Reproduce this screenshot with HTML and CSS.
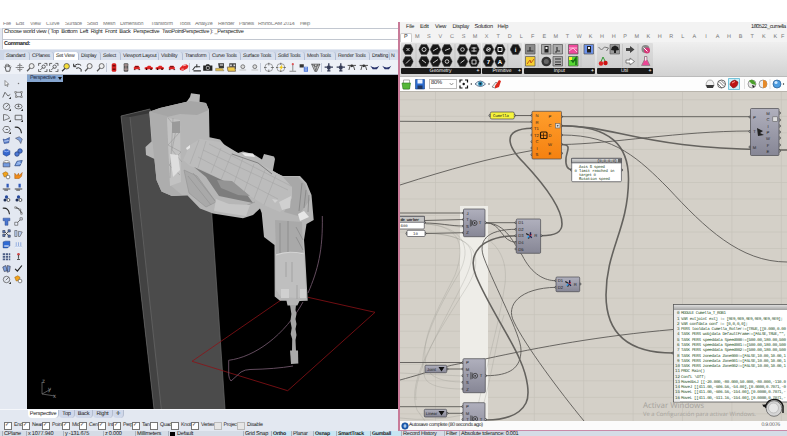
FILE: index.html
```html
<!DOCTYPE html>
<html lang="en">
<head>
<meta charset="utf-8">
<title>Robot toolpath workspace</title>
<link rel="stylesheet" href="styles.css">
</head>
<body>
<svg class="defs" width="0" height="0" aria-hidden="true">
<defs>
<symbol id="hex" viewBox="0.4 0.7 11.2 10.6"><path d="M3.2 1h5.6L11.500 6 8.800 11H3.200L.5 6z" fill="#161616" stroke="#555" stroke-width=".6"/></symbol>
<symbol id="hand" viewBox="0 0 12 12"><path d="M3 6.5 1.8 5M3.5 6V2.5M5 5.5v-4M6.7 5.5V2M8.3 6V3M3 6l1 4.5h4.2L9 6.500 10 5" fill="none" stroke="#444"/></symbol>
<symbol id="rot" viewBox="0 0 12 12"><path d="M6 1v10M1 6h10M3 4Q6 2 9 4M3 8q3 2 6 0" fill="none" stroke="#555" stroke-width=".8"/></symbol>
<symbol id="lens" viewBox="0 0 12 12"><circle cx="7" cy="4.300" r="3" fill="#eee" stroke="#555"/><path d="M5 6.800 1.500 10.500" stroke="#555" stroke-width="1.500"/></symbol>
<symbol id="lensy" viewBox="0 0 12 12"><circle cx="7" cy="4.500" r="3.300" fill="#f7df39" stroke="#555"/><path d="M5 7 1.500 10.500" stroke="#333" stroke-width="1.500"/></symbol>
<symbol id="fit" viewBox="0 0 12 12"><path d="M1 4V1h3M8 1h3v3M11 8v3H8M4 11H1V8" fill="none" stroke="#444"/><path d="M3 9l3-3" stroke="#444"/><circle cx="7" cy="5" r="2" fill="none" stroke="#444"/></symbol>
<symbol id="undo" viewBox="0 0 12 12"><path d="M1 1.500v3.500h3M1.500 4.500Q6 0 10 3.500M4 7q3-2 6 1v3" fill="none" stroke="#333" stroke-width="1.200"/></symbol>
<symbol id="cartop" viewBox="0 0 12 12"><rect x="3.500" y="1" width="5.500" height="10" rx="1.800" fill="#d92020"/><path d="M4.500 4h3.500M4.500 8h3.500" stroke="#400" stroke-width="1.200"/></symbol>
<symbol id="carbot" viewBox="0 0 12 12"><rect x="3.500" y="1" width="5.500" height="10" rx="1" fill="#555"/><path d="M4 3h4.500M4 8h4.500M6.200 2v8" stroke="#c8a8a8"/></symbol>
<symbol id="carside" viewBox="0 0 12 12"><path d="M1 8V6l3-.8L5 4h3l1.200 1.500L11 6v2z" fill="#e02222"/><circle cx="3.300" cy="8" r="1" fill="#300"/><circle cx="8.700" cy="8" r="1" fill="#300"/></symbol>
<symbol id="carfront" viewBox="0 0 12 12"><path d="M2.500 8V6L4 4h4l1.500 2v2z" fill="#e02222"/><path d="M2.500 8.500h2M8 8.500h2M4 5h4" stroke="#411"/></symbol>
<symbol id="carper" viewBox="0 0 12 12"><path d="M1 7l4-4 4-1 2.500 2-1 3L5 10 1.500 9z" fill="#e02222"/><path d="M5 4l4-1M3 8h3" stroke="#fff" stroke-width=".8"/></symbol>
<symbol id="truck" viewBox="0 0 12 12"><path d="M1 9l3-4h6M2 10h9M6 2v4" fill="none" stroke="#333" stroke-width="1.300"/></symbol>
<symbol id="camera" viewBox="0 0 12 12"><path d="M.5 3.500h3L4.500 2h3l1 1.500h3V10H.5z" fill="#222"/><circle cx="6" cy="6.500" r="2.500" fill="#aaa"/><circle cx="6" cy="6.500" r="1.400" fill="#222"/></symbol>
<symbol id="disk" viewBox="0 0 12 12"><path d="M4 1h7v6H5z" fill="#333"/><path d="M6 2h4v2H6z" fill="#bbb"/><path d="M1 7h8l2 3H1z" fill="#dcb94a" stroke="#665" stroke-width=".5"/></symbol>
<symbol id="folder" viewBox="0 0 12 12"><path d="M3 1h8v7H3z" fill="#454545"/><path d="M4 2.500h2v2H4zM8 2.500h2v2H8z" fill="#ddd"/><path d="M.5 5.500h9l1 5h-9z" fill="#f2cb49" stroke="#765"/></symbol>
<symbol id="ball" viewBox="0 0 12 12"><circle cx="6" cy="5" r="2.300" fill="#ddd" stroke="#666"/><path d="M2 9h8" stroke="#bbb"/></symbol>
<symbol id="target" viewBox="0 0 12 12"><circle cx="6" cy="6" r="4.800" fill="none" stroke="#777" stroke-width=".8"/><path d="M6 0v3.500M6 8.500V12M0 6h3.500M8.500 6H12" stroke="#444" stroke-width=".8"/></symbol>
<symbol id="targety" viewBox="0 0 12 12"><circle cx="6" cy="6" r="4.800" fill="none" stroke="#777" stroke-width=".8"/><path d="M6 0v3M6 9v3M0 6h3M9 6h3" stroke="#444" stroke-width=".8"/><path d="M8 2 4 6.500h2L5 10l4-5H7z" fill="#f0c810"/></symbol>
<symbol id="pin" viewBox="0 0 12 12"><path d="M6 2v8M2 10.500h8" stroke="#777"/><circle cx="6" cy="2" r="1.300" fill="#d55"/></symbol>
<symbol id="cubes" viewBox="0 0 12 12"><path d="M1 2h5v4H1z" fill="#333"/><path d="M6 5h5v6H6z" fill="#4a74d8"/><path d="M7 6.500h3M7 9h3" stroke="#dbe8ff"/></symbol>
<symbol id="cone" viewBox="0 0 12 12"><path d="M1 2h10L7 11H5zM4 2l2 8 2-8M1 2l5 3 5-3" fill="#ccc" stroke="#444" stroke-width=".8"/></symbol>
<symbol id="plane" viewBox="0 0 12 12"><path d="M6 1v9.500M1 5.500h10M4 10h4" stroke="#333a55" stroke-width="1.600"/><path d="M4 4h4v4H4z" fill="#333a55"/></symbol>
<symbol id="plane2" viewBox="0 0 12 12"><path d="M1 3.500h10M4 4l-1.500 5M8 4l1.500 5" stroke="#555" stroke-width="1.200"/><circle cx="6" cy="4" r="1.600" fill="#333"/></symbol>
<symbol id="plane3" viewBox="0 0 12 12"><path d="M.5 4q5.500 4 11 0L8.500 8h-5z" fill="#27326b"/></symbol>

<symbol id="p-arrow" viewBox="0 0 12 12"><path d="M4 2v7l1.700-1.500L7 10l1-.500-1.200-2.500H9z" fill="#fff" stroke="#444" stroke-width=".7"/></symbol>
<symbol id="p-dot" viewBox="0 0 12 12"><circle cx="6" cy="6" r="1" fill="#777"/></symbol>
<symbol id="p-poly" viewBox="0 0 12 12"><path d="M1 10 4 3l4 5 3-2" fill="none" stroke="#444"/><path d="M12 9v3H9z" fill="#333"/></symbol>
<symbol id="p-crv" viewBox="0 0 12 12"><path d="M2 3h8v6H3z" fill="none" stroke="#555"/><path d="M1 2h2v2H1zM9 2h2v2H9zM2 8h2v2H2zM9 8h2v2H9z" fill="#fff" stroke="#444" stroke-width=".6"/></symbol>
<symbol id="p-circ" viewBox="0 0 12 12"><circle cx="6" cy="6" r="4.300" fill="none" stroke="#555"/><path d="M5 7l4-4" stroke="#555"/><path d="M12 9v3H9z" fill="#333"/></symbol>
<symbol id="p-ell" viewBox="0 0 12 12"><ellipse cx="6" cy="6" rx="4.800" ry="3.200" fill="none" stroke="#555"/><path d="M6 3v4M4.500 6h3" stroke="#555"/><path d="M12 9v3H9z" fill="#333"/></symbol>
<symbol id="p-arc" viewBox="0 0 12 12"><path d="M2 2q7 0 8 5L2 10z" fill="none" stroke="#555"/><path d="M12 9v3H9z" fill="#333"/></symbol>
<symbol id="p-rect" viewBox="0 0 12 12"><path d="M1.500 3h9v6h-9z" fill="none" stroke="#444"/><path d="M12 9v3H9z" fill="#333"/></symbol>
<symbol id="p-gon" viewBox="0 0 12 12"><path d="M3.500 2h5L11 6l-2.500 4h-5L1 6z" fill="none" stroke="#555"/><path d="M5 6h3" stroke="#444"/><path d="M12 9v3H9z" fill="#333"/></symbol>
<symbol id="p-fil" viewBox="0 0 12 12"><path d="M1 3q8-1 9 8" fill="none" stroke="#222" stroke-width="1.500"/></symbol>
<symbol id="p-srf" viewBox="0 0 12 12"><path d="M1.500 4 4 5l6-3-1 7-6 1z" fill="#5f83cc" stroke="#223c7a" stroke-width=".7"/><path d="M3 7l6-1" stroke="#dce7ff"/></symbol>
<symbol id="p-ext" viewBox="0 0 12 12"><path d="M2 3l5-2 4 3-2 6-2-4z" fill="#84a5df" stroke="#445" stroke-width=".7"/></symbol>
<symbol id="p-box" viewBox="0 0 12 12"><path d="M1.500 3.500 6 1.500l4.500 2v5L6 11 1.500 8.500z" fill="#3567cf" stroke="#173375" stroke-width=".6"/><path d="M2 3.600 6 5l4-1.400" fill="none" stroke="#aec8ff"/></symbol>
<symbol id="p-pipe" viewBox="0 0 12 12"><circle cx="8" cy="4" r="3" fill="#4d79d4" stroke="#223c7a"/><circle cx="4" cy="8" r="3" fill="#4d79d4" stroke="#223c7a"/></symbol>
<symbol id="p-cyl" viewBox="0 0 12 12"><path d="M1.500 5h9v5.500h-9z" fill="#739be0" stroke="#334" stroke-width=".7"/><ellipse cx="6" cy="3.500" rx="3.500" ry="1.500" fill="#fff" stroke="#555" stroke-width=".7"/></symbol>
<symbol id="p-patch" viewBox="0 0 12 12"><path d="M1 9l3-6 7-1-3 7z" fill="#5f8cd8" stroke="#334f88"/><path d="M3 7l6-1M4.500 4.500l4-.5" stroke="#cfe0ff"/></symbol>
<symbol id="p-join" viewBox="0 0 12 12"><path d="M1 3l4-2 3 2-1 4-4 1z" fill="#f2a31c" stroke="#9a5d00" stroke-width=".7"/><circle cx="8" cy="8" r="2.500" fill="#fff" stroke="#666"/></symbol>
<symbol id="p-expl" viewBox="0 0 12 12"><path d="M1 10V3l3 3 2-3 1 3 4-4-1 5-3 3z" fill="#f08b19" stroke="#9a4d00" stroke-width=".6"/></symbol>
<symbol id="p-trim" viewBox="0 0 12 12"><path d="M6 1h3v5H6z" fill="#2f58b8"/><path d="M1 8h10M3 9.500h5" stroke="#444" stroke-width="1.300"/></symbol>
<symbol id="p-grp" viewBox="0 0 12 12"><circle cx="6" cy="4" r="2.200" fill="#274a9c"/><circle cx="4" cy="8" r="2" fill="#1c2c55"/><circle cx="8.500" cy="8" r="2" fill="#fff" stroke="#333"/></symbol>
<symbol id="p-pts" viewBox="0 0 12 12"><path d="M2 2q6 0 8 8M2 2l6 3 2 5" fill="none" stroke="#444"/><path d="M1 1h2v2H1zM7 4h2v2H7zM9 9h2v2H9z" fill="#fff" stroke="#333" stroke-width=".6"/></symbol>
<symbol id="p-text" viewBox="0 0 12 12"><path d="M1.500 1.500h9V5H8v6H4V5H1.500z" fill="#4a76cf" stroke="#233f7f" stroke-width=".6"/></symbol>
<symbol id="p-move" viewBox="0 0 12 12"><path d="M4 8l4-4" stroke="#444"/><path d="M1 7h4v4H1zM8 1h3v3H8z" fill="#eef3ff" stroke="#444" stroke-width=".8"/></symbol>
<symbol id="p-arr" viewBox="0 0 12 12"><path d="M1 2h3v3H1zM1 7h3v3H1zM8 1h3v3H8zM8 8h3v3H8z" fill="#5c7fc4" stroke="#223" stroke-width=".7"/><path d="M4 4l4 4M4 8l4-4" stroke="#333"/></symbol>
<symbol id="p-flow" viewBox="0 0 12 12"><path d="M1 2h3v8H1zM6 3l5 1-3 6H6z" fill="#b9cdf0" stroke="#555" stroke-width=".8"/></symbol>
<symbol id="p-bool" viewBox="0 0 12 12"><path d="M1.500 2.500l3-1h6v6l-3 3h-6z" fill="#2f6ad4" stroke="#173375" stroke-width=".6"/><path d="M3 8h6" stroke="#fff" stroke-width="1.400"/></symbol>
<symbol id="p-lite" viewBox="0 0 12 12"><path d="M1 9.500h10M3 8V3M6 8V3M9 8V3" stroke="#7c9ddb"/><path d="M1 10h10" stroke="#f8fbff"/></symbol>
<symbol id="p-grid" viewBox="0 0 12 12"><path d="M1 1.500h3v2.500H1zM5 1.500h3v2.500H5zM9 1.500h2v2.500H9zM1 5h3v2.500H1zM5 5h3v2.500H5zM9 5h2v2.500H9zM1 8.500h3V11H1zM5 8.500h3V11H5zM9 8.500h2V11H9z" fill="#4b5c84"/></symbol>
<symbol id="p-ana" viewBox="0 0 12 12"><circle cx="6" cy="3" r="1.800" fill="#c44"/><path d="M6 4v5M4 10h4" stroke="#555" stroke-width="1.500"/></symbol>
<symbol id="p-dim" viewBox="0 0 12 12"><path d="M1 4l4-2 2 7-4 1zM7 2l4 1-1 7-3 1z" fill="#7d9fdb" stroke="#223" stroke-width=".7"/></symbol>
<symbol id="p-chk" viewBox="0 0 12 12"><path d="M1.500 6.500 4.500 9.500 10.500 2" fill="none" stroke="#222" stroke-width="1.600"/></symbol>
</defs>
</svg>

<div class="topgap"></div>
<div class="desk">
<section class="rhino">
  <div class="rmenu"><span>File</span><span>Edit</span><span>View</span><span>Curve</span><span>Surface</span><span>Solid</span><span>Mesh</span><span>Dimension</span><span>Transform</span><span>Tools</span><span>Analyze</span><span>Render</span><span>Panels</span><span>RhinoCAM 2014</span><span>Help</span></div>
  <div class="history">Choose world view ( Top&nbsp; Bottom&nbsp; Left&nbsp; Right&nbsp; Front&nbsp; Back&nbsp; Perspective&nbsp; TwoPointPerspective ): _Perspective</div>
  <div class="command">Command:</div>
  <div class="rtabs"><span>Standard</span><span>CPlanes</span><span class="on">Set View</span><span>Display</span><span>Select</span><span>Viewport Layout</span><span>Visibility</span><span>Transform</span><span>Curve Tools</span><span>Surface Tools</span><span>Solid Tools</span><span>Mesh Tools</span><span>Render Tools</span><span>Drafting</span><span class="last">N</span></div>
  <div class="rtools">
    <svg><use href="#hand"/></svg><svg><use href="#rot"/></svg><svg><use href="#lens"/></svg><svg><use href="#fit"/></svg><svg><use href="#fit"/></svg><svg><use href="#lensy"/></svg><svg><use href="#undo"/></svg><svg><use href="#lens"/></svg><svg><use href="#lens"/></svg><i></i>
    <svg><use href="#cartop"/></svg><svg><use href="#carbot"/></svg><svg><use href="#carfront"/></svg><svg><use href="#carside"/></svg><svg><use href="#carside"/></svg><svg><use href="#carfront"/></svg><svg><use href="#carper"/></svg><i></i>
    <svg><use href="#truck"/></svg><svg><use href="#camera"/></svg><svg><use href="#disk"/></svg><svg><use href="#folder"/></svg><svg><use href="#ball"/></svg><svg><use href="#ball"/></svg><i class="wide"></i>
    <svg><use href="#target"/></svg><svg><use href="#targety"/></svg><svg><use href="#pin"/></svg><svg><use href="#cubes"/></svg><svg><use href="#cone"/></svg><i></i>
    <svg><use href="#plane"/></svg><svg><use href="#plane"/></svg><svg><use href="#plane2"/></svg><svg><use href="#plane2"/></svg><svg><use href="#plane3"/></svg><svg><use href="#plane3"/></svg>
  </div>
  <div class="rmain">
    <div class="palette">
      <svg><use href="#p-arrow"/></svg><svg><use href="#p-dot"/></svg>
      <svg><use href="#p-poly"/></svg><svg><use href="#p-crv"/></svg>
      <svg><use href="#p-circ"/></svg><svg><use href="#p-ell"/></svg>
      <svg><use href="#p-arc"/></svg><svg><use href="#p-rect"/></svg>
      <svg><use href="#p-gon"/></svg><svg><use href="#p-fil"/></svg>
      <svg><use href="#p-srf"/></svg><svg><use href="#p-ext"/></svg>
      <svg><use href="#p-box"/></svg><svg><use href="#p-pipe"/></svg>
      <svg><use href="#p-cyl"/></svg><svg><use href="#p-patch"/></svg>
      <svg><use href="#p-join"/></svg><svg><use href="#p-expl"/></svg>
      <svg><use href="#p-trim"/></svg><svg><use href="#p-trim"/></svg>
      <svg><use href="#p-grp"/></svg><svg><use href="#p-grp"/></svg>
      <svg><use href="#p-fil"/></svg><svg><use href="#p-pts"/></svg>
      <svg><use href="#p-text"/></svg><svg><use href="#p-move"/></svg>
      <svg><use href="#p-arr"/></svg><svg><use href="#p-flow"/></svg>
      <svg><use href="#p-bool"/></svg><svg><use href="#p-lite"/></svg>
      <svg><use href="#p-grid"/></svg><svg><use href="#p-ana"/></svg>
      <svg><use href="#p-dim"/></svg><svg><use href="#p-chk"/></svg>
      <svg><use href="#p-circ"/></svg><svg><use href="#p-join"/></svg>
    </div>
    <div class="viewport">
      <div class="vlabel"><span>Perspective</span><b></b></div>
      <svg class="scene" viewBox="27 75 371 334" width="371" height="334">
        <path d="M121 116 150 109 209.500 180 225 409H154z" fill="#4b4b4b"/>
        <path d="M121 116 130 114 161.300 409H154z" fill="#424242"/>
        <path d="M121 116 150 109V113L130 117z" fill="#373737"/>
        <path d="M121 116 154 409M130 117 161.300 409M211.700 213 225 409M121 116 150 109" stroke="#686868" stroke-width=".7" fill="none"/>
        <g fill="none" stroke="#8c1216" stroke-width=".8"><path d="M281 300 192 361.300 287.700 390.700 375 312.300 308 297.300"/></g>
        <path d="M322.300 216C323 250 318 270 308 293M303 302C285 335 255 357 228.700 360.300V375Q229 379 231 381L241 372Q245 369.500 250 369.500 275 369 293 366" fill="none" stroke="#6d5368" stroke-width=".9"/>
        <path d="M149.300 111.700 160 108 186.700 101.700 190 97 191 93.300 200 94.500 199.500 101.700 206 103 209 110 209.500 137.300 220 139.500 227 148 238 153 243 151.500 253 154 262 159.500 264 154 274 156.500 275 159 272.700 171.500 283 176 300 176 306.500 183 311.500 195 313.700 220 306.500 224 304 240 305 253 307.700 300.700 299.500 301 297.300 305.500 287.500 305.500 286.500 300.700 280 300.700 274.700 296.500 274.500 245 264 237 261.700 213 260 208.500 253 215 243 218.300 213 213.500 200 208.500 187.500 195.500 172 196 161.500 191.500 156.500 180 154.500 159 146 155 145.500 147 151.500 141.500z" fill="#b6b6b6"/>
        <path d="M149.300 111.700 160 108 190 101 206 103 209 110 197 115 180 114 167 117z" fill="#a6a6a6"/>
        <path d="M149.300 111.700 167 116 170 185 182 195 172 196 161.500 191.500 156.500 180z" fill="#adadad"/>
        <path d="M167 118 180 120 181 182 170 186z" fill="#c2c2c2"/>
        <path d="M168 118 180 132 168 145 181 152 169 165 180 175M173 118l-3 60M177 125 172 150 182 162" stroke="#929292" stroke-width=".5" fill="none"/>
        <path d="M170 154l8 1 2 15-7 7z" fill="#dedede"/>
        <path d="M172 122 180 121V133H172z" fill="#9a9a9a"/>
        <path d="M183 160 190 145 200 139 220 142 243 156 270 169 287 179 294 190 292 202 280 212 266 206 240 190 205 171 190 166z" fill="#bcbcbc"/>
        <path d="M199 140 190 164M206 141 198 168M221 148 211 173M232 153 221 180M243 158 233 186M254 164 244 192M265 170 254 199M276 175 264 205M203 150 288 190M198 157 278 199M209 144 291 186" stroke="#a2a2a2" stroke-width=".5" fill="none"/>
        <path d="M194 167 206 177 219 196 253 203 245 192 222 180z" fill="#7d7d7d"/>
        <path d="M217 180 232 181 250 196 238 195 221 188z" fill="#949494"/>
        <path d="M184 170 197 176 216 202 206 207 189 193z" fill="#a9a9a9" stroke="#929292" stroke-width=".6"/>
        <path d="M188 176 211 205M193 173 215 201M219 205l10 4 14-2 12-5" stroke="#909090" stroke-width=".6" fill="none"/>
        <path d="M216 199 229 204 250 205 246 216 226 213 214 211z" fill="#c6c6c6"/>
        <path d="M232 154 258 163 272 174" stroke="#808080" stroke-width="1" fill="none"/>
        <path d="M283 177H298L305 184 310 200 298 216 284 212 292 198 292 187z" fill="#a8a8a8"/>
        <path d="M306 190 304 208M309 195 308 212M302 183 299 211" stroke="#808080" stroke-width=".7"/>
        <path d="M298 214 304 211 309 217 300 221z" fill="#e6e6e6"/>
        <path d="M242 153 253 153.500 255 157 245 156zM150 142.500 154 143M186 148l4-3v3l-3 2zM191 95l8 1" fill="#e8e8e8"/>
        <path d="M272 199l6 1-3 3zM279 202 291 196 290 208 282 210z" fill="#d0d0d0"/>
        <path d="M275 220 302 222 303 252 276 255z" fill="#a9a9a9"/>
        <path d="M280 223V253M288 221V252M296 237 303 250M296 227 303 240" stroke="#858585" stroke-width=".7"/>
        <path d="M276 254Q290 250 304 255L306 293 298 298 281 297 276 290z" fill="#bfbfbf"/>
        <path d="M276 255Q290 250 304 254" stroke="#ddd" stroke-width=".8" fill="none"/>
        <path d="M286 262v15M292 262v20M297 285v14" stroke="#999" stroke-width=".7"/>
        <path d="M281 289h8v9h-8zM300 289h6v9h-6z" fill="#d0d0d0"/>
        <path d="M290 305h6l-.5 5 1 4-1 5 1 5-1 5 1 6-1 5 .5 11h-4l.2-12-1.500-5 1-6-1.300-7 1-7z" fill="#a5a5a5"/>
        <path d="M290 350.500h8l.3 13-7.300.5z" fill="#a9a9a9"/>
        <path d="M42 394V382M42 394 51 389M42 394 55 396" stroke="#777" stroke-width=".7" fill="none"/>
        <g class="axis"><text x="42" y="383">z</text><text x="48" y="391">y</text><text x="53" y="398">x</text></g>
      </svg>
    </div>
  </div>
  <div class="vtabs"><span class="on">Perspective</span><span>Top</span><span>Back</span><span>Right</span><span>✛</span></div>
  <div class="osnap"><label class="c">End</label><label class="c">Near</label><label class="c">Point</label><label class="c">Mid</label><label class="c">Cen</label><label class="c">Int</label><label class="c">Perp</label><label class="c">Tan</label><label>Quad</label><label>Knot</label><label class="c">Vertex</label><label class="off">Project</label><label class="off">Disable</label></div>
</section>

<section class="gh">
  <div class="gmenu"><span>File</span><span>Edit</span><span>View</span><span>Display</span><span>Solution</span><span>Help</span><span class="title">180522_cumella</span></div>
  <div class="gtabs"><span class="on">P</span><span>M</span><span>S</span><span>V</span><span>C</span><span>S</span><span>M</span><span>X</span><span>T</span><span>D</span><span>L</span><span>F</span><span>E</span><span>M</span><span>T</span><span>W</span><span>K</span><span>H</span><span>H</span><span>P</span><span>M</span><span>K</span><span>H</span><span>R</span><span>L</span><span>A</span><span>I</span><span>A</span><span>H</span><span>B</span><span>T</span><span>K</span><span>K</span><span class="end">F</span></div>
  <div class="ribbon">
    <div class="group geo">
      <svg viewBox="0 0 80 25" width="80" height="25">
        <g><use href="#hex" x="1.500" y="1" width="11" height="11"/><use href="#hex" x="1.500" y="13" width="11" height="11"/><use href="#hex" x="17.500" y="1" width="11" height="11"/><use href="#hex" x="17.500" y="13" width="11" height="11"/><use href="#hex" x="29" y="1" width="11" height="11"/><use href="#hex" x="29" y="13" width="11" height="11"/><use href="#hex" x="40.500" y="1" width="11" height="11"/><use href="#hex" x="40.500" y="13" width="11" height="11"/><use href="#hex" x="56" y="1" width="11" height="11"/><use href="#hex" x="56" y="13" width="11" height="11"/><use href="#hex" x="67.500" y="1" width="11" height="11"/><use href="#hex" x="67.500" y="13" width="11" height="11"/></g>
        <path d="M15 1v23M54 1v23" stroke="#bbb" stroke-width=".6"/>
        <g fill="none" stroke="#ddd" stroke-width=".9"><path d="M5.500 5l3 3M8.500 5l-3 3M5 20.500l4-4M21 17l4 3M32 20l5-3.500M32 8l5-3M44 7.500l5-2"/><circle cx="23" cy="6.500" r="2"/><circle cx="46" cy="18.500" r="1.800"/><circle cx="61.500" cy="6.500" r="1.800"/><path d="M59.500 20l4-3M70.500 5h5M70.500 8h5M73 4v5M71 17h4v4h-4z"/></g>
      </svg><em>Geometry<b>+</b></em>
    </div>
    <div class="group prim">
      <svg viewBox="0 0 40 25" width="40" height="25">
        <use href="#hex" x="1" y="1" width="11" height="11"/><use href="#hex" x="1" y="13" width="11" height="11"/><use href="#hex" x="12.500" y="1" width="11" height="11"/><use href="#hex" x="12.500" y="13" width="11" height="11"/><use href="#hex" x="28" y="1" width="11" height="11"/>
        <path d="M25.800 1v23" stroke="#bbb" stroke-width=".6"/>
        <g class="hexlet"><text x="6.500" y="20.700">7</text><text x="18" y="20.700">A</text><text x="33.500" y="9">i</text></g>
        <path d="M4.500 7.500l4-2M16 4.500v4h4v-4z" stroke="#eee" fill="none"/><circle cx="6.500" cy="6.500" r="1.800" stroke="#eee" fill="none" stroke-width=".8"/>
      </svg><em>Primitive<b>+</b></em>
    </div>
    <div class="group inp">
      <svg viewBox="0 0 71.500 25" width="71.500" height="25">
        <g stroke="#555" stroke-width=".7"><path d="M1.500 1.500h9.500v9.500H1.500z" fill="#8a8a8a"/><path d="M1.500 13.500h9.500v9.500H1.500z" fill="#f6cf32"/><path d="M17.500 1.500h9.500v9.500h-9.500zM29 1.500h9.500v9.500H29zM29 13.500h9.500v9.500H29z" fill="#aaa"/><path d="M44.500 1.500H54v9.500h-9.500z" fill="#ef4b9c"/><path d="M44.500 13.500H54v9.500h-9.500z" fill="#56d832"/><path d="M60 1.500h9.500v9.500H60z" fill="#6d93ec"/></g>
        <circle cx="22.300" cy="18.500" r="4.800" fill="#333"/><circle cx="22.300" cy="18.500" r="2.500" fill="#666"/>
        <path d="M14.200 1v23M41.500 1v23M57 1v23" stroke="#bbb" stroke-width=".6"/>
        <path d="M3 8h6.500M6 4v4M33 4v4h3M31 9h2M31 16h6M31 19h6M31 21.500h6" stroke="#333" fill="none" stroke-width="1.200"/>
        <path d="M3 21l3-4 1 3 3-4" stroke="#c4551b" fill="none"/>
        <path d="M20.500 3h4v6.500h-4zM63 3h4v6.500h-4z" fill="#222"/><path d="M21.500 4h2v2h-2zM64 4h2v2h-2z" fill="#eee"/>
        <path d="M45 8l4-3 4 4M45 5h8" stroke="#ffc1dd" fill="none"/><path d="M46 15l3 4 3-4v7" stroke="#166b16" stroke-width="1.500" fill="none"/><path d="M45 14h3v3h-3z" fill="#faf232"/>
      </svg><em>Input<b>+</b></em>
    </div>
    <div class="group util">
      <svg viewBox="0 0 56 25" width="56" height="25">
        <path d="M1.500 4l3 3 3-3 4 1-2 3" fill="none" stroke="#777"/><path d="M13 1.500h9.500v9.500H13z" fill="#999" stroke="#555" stroke-width=".6"/><path d="M14 7l1-3 3-1.500L21 4l1 3-3 .5V10h-2V7.500z" fill="#1d1d1d"/>
        <path d="M3 21l3-7 3 6" fill="none" stroke="#393"/><circle cx="4" cy="20.500" r="2.200" fill="#d22"/><circle cx="8.500" cy="20" r="2.200" fill="#c11"/>
        <path d="M29 5h4V3l4.500 3.500L33 10V8h-4z" fill="#444"/><path d="M29 17h4v-2l4.500 3.500L33 22v-2h-4z" fill="#fff" stroke="#666" stroke-width=".8"/>
        <path d="M25.500 1v23M41 1v23" stroke="#bbb" stroke-width=".6"/>
        <circle cx="48.500" cy="6" r="4" fill="#888"/><circle cx="50" cy="7.500" r="3" fill="#d63878"/><path d="M46.500 4.500l4 4" stroke="#fff"/>
        <path d="M47.500 13.500h2.500v3l3 6h-8.500l3-6z" fill="#e94796" stroke="#777" stroke-width=".6"/><path d="M48 14h1.500v3L48 18z" fill="#eee"/>
      </svg><em>Util<b>+</b></em>
    </div>
  </div>
  <div class="gtool">
    <svg width="27" height="12" viewBox="0 0 27 12"><path d="M2.500 2h6v9h-6z" fill="#fff" stroke="#777" stroke-width=".6"/><path d="M1 5h8.500l-1 6H2z" fill="#55b739" stroke="#2a7a1d" stroke-width=".6"/><path d="M14.500 1.500h9v9.500h-9z" fill="#2c6cd0" stroke="#184285" stroke-width=".6"/><path d="M16.500 1.500h5v4h-5z" fill="#eaf2ff"/><path d="M16.500 7.500h5V11h-5z" fill="#20365e"/></svg>
    <div class="combo"><span>80%</span><svg width="5" height="4" viewBox="0 0 5 4"><path d="M.7 1 2.500 3 4.300 1" fill="none" stroke="#666" stroke-width=".7"/></svg></div>
    <svg width="46" height="12" viewBox="0 0 46 12"><path d="M3 4.500V2h2.500M8 2h2.500v2.500M10.500 7.500V10H8M5.500 10H3V7.500" fill="none" stroke="#111" stroke-width="1.200"/><circle cx="6.700" cy="6" r="1.200" fill="#111"/><circle cx="14.300" cy="6" r=".7" fill="#222"/><path d="M18 6q5.500-6 10.500 0-5 5-10.500 0z" fill="#d8edf5" stroke="#346" stroke-width=".7"/><circle cx="23.400" cy="5.700" r="2.300" fill="#2183ad"/><circle cx="23.400" cy="5.700" r="1" fill="#123"/><circle cx="32" cy="6" r=".7" fill="#222"/><path d="M35 9l4-5 2 2-3 4z" fill="#eee" stroke="#555" stroke-width=".6"/><path d="M38 8l4-6 2 1-2 6-4 1.500z" fill="#dd2a1d"/></svg>
    <svg class="right" width="83" height="12" viewBox="0 0 83 12"><path d="M2 8q0-6 4-6t4 6z" fill="#f2f2f2" stroke="#777" stroke-width=".6"/><path d="M2 7h8l-1 3H3z" fill="#3a3a3a"/><circle cx="17.500" cy="6" r="4" fill="#fff" stroke="#444" stroke-width=".8"/><path d="M15 3.500l5 5M17 2.500l4 4M14 6l4 4" stroke="#444" stroke-width=".7"/><path d="M24.500.500h11v11h-11z" fill="#cdeff8" stroke="#58b9d4" stroke-width=".8"/><path d="M26 7q0-4 5-5l3 2q0 5-5 6z" fill="#bd1515" stroke="#6c0a0a" stroke-width=".5"/><path d="M28 5l3-1.500" stroke="#ff9c92"/><path d="M40.500 1v10M66 1v10" stroke="#ccc" stroke-width=".6"/><circle cx="48" cy="6" r="4" fill="#e8e8e8" stroke="#666" stroke-width=".6"/><path d="M45 3q3-3 6 1l1 3-4-1z" fill="#4a9f2a"/><path d="M48 7l3 1-2 2z" fill="#222"/><circle cx="59" cy="6" r="4" fill="#eee" stroke="#666" stroke-width=".6"/><path d="M59 2a4 4 0 0 1 0 8z" fill="#e58a2a"/><circle cx="73" cy="6" r="4" fill="#4d9de0" stroke="#28598c" stroke-width=".7"/><circle cx="72" cy="4.500" r="1.600" fill="#cfe8ff"/><circle cx="79.500" cy="6" r=".7" fill="#222"/></svg>
  </div>
  <svg class="canvas" viewBox="400 91 387 330" width="387" height="330">
    <defs>
      <pattern id="grid" x="435" y="99.300" width="49.400" height="16.530" patternUnits="userSpaceOnUse"><path d="M0 .3H49.400M.3 0V16.530" stroke="#c4c0b8" stroke-width=".8"/></pattern>
      <linearGradient id="comp" x1="0" y1="0" x2="0" y2="1"><stop offset="0" stop-color="#b0b0bd"/><stop offset="1" stop-color="#868695"/></linearGradient>
      <linearGradient id="orange" x1="0" y1="0" x2="0" y2="1"><stop offset="0" stop-color="#ff9e2c"/><stop offset="1" stop-color="#f58110"/></linearGradient>
      <linearGradient id="head" x1="0" y1="0" x2="0" y2="1"><stop offset="0" stop-color="#dedede"/><stop offset="1" stop-color="#a2a2a2"/></linearGradient>
      <symbol id="robot" viewBox="0 0 10 10"><path d="M1 2.500 5 5 4 9" stroke="#222" stroke-width="1.700" fill="none"/><path d="M5 5 2.500 8" stroke="#3fa0e8" stroke-width="1.800"/><path d="M5 5 8 4" stroke="#d23" stroke-width="1.600"/><path d="M6 5.500 8 8M6.500 1v3.500" stroke="#1d2050" stroke-width="1.700"/></symbol>
      <symbol id="tgt" viewBox="0 0 10 10"><path d="M1.500 1v8M3 1.500v7" stroke="#333" stroke-width=".8"/><circle cx="6.300" cy="5" r="2.700" fill="none" stroke="#333" stroke-width=".9"/><circle cx="6.300" cy="5" r="1" fill="#333"/></symbol>
    </defs>
    <path d="M400 91h387v330H400z" fill="#d4d0c8"/>
    <path d="M400 91h387v330H400z" fill="url(#grid)"/>
    <path d="M400 91h387v1H400z" fill="#b8b4ac"/>
    <path d="M460 206h28v215h-28z" fill="#eeede8"/>
    <g class="faint">
      <path d="M426 224C460 226 475 245 458 275C440 305 415 350 425 378Q430 389 463 389"/>
      <path d="M426 224C455 226 468 240 455 275C438 310 418 340 427 368Q432 382 463 382"/>
      <path d="M426 233C480 235 485 260 465 290C440 330 405 380 417 410L425 421"/>
      <path d="M426 224C500 224 510 260 504 290C499 325 480 390 475 421"/>
      <path d="M426 233C475 236 480 250 462 285C445 320 412 375 416 400M400 373 463 376M504 315C497 335 490 390 478 421M400 418q30 4 63-3"/>
    </g>
    <g class="wire">
      <path d="M400 121.300 532 122M514 115.500H532M400 185C450 169 490 158 532 150.500M562 116.700H750"/>
      <path class="dbl" d="M532 128.300C500 129 508 147 524 163C538 178 562 205 562 224C562 232 556 235.700 541 235.700"/>
      <path class="dbl" d="M562 125.700C610 126 629 145 628.500 180C628 230 606 250 606 295C606 335 630 353 673 353"/>
      <path class="dbl" d="M562 125.700C620 126 640 150 787 150"/>
      <path d="M562 135C615 135 640 160 668 188C705 228 740 262 787 262"/>
      <path d="M562 144.500C610 144 680 131 750 131"/>
      <path class="dbl" d="M562 144.500C572 145 567 150 566 158Q565 169.500 572 169.700"/>
      <path d="M400 213H464M424 220.500 464 219.500M424 223C440 223 450 226 464 226M425 233.500 464 232.700M485 222.700H517"/>
      <path d="M485 222.700C503 223 500 242.300 517 242.300M485 222.700C507 223 514 245 522 255C532 275 545 280.700 556 280.700"/>
      <path d="M517 229.300C485 229 478 242 484 258C494 285 521 335 521 350C521 368 510 375.700 486 375.700"/>
      <path class="dbl" d="M517 235.700C480 236 467 254 476 276C488 305 512 340 520 360C528 378 530 395 526 403C520 415 505 420 486 420"/>
      <path d="M556 287.300C520 288 505 305 514 322C525 345 560 392 584 421"/>
      <path d="M400 380C430 372 440 367 463 363L485 359C540 347 600 336 673 329.500"/>
      <path d="M400 362.500H463M447 369H463M400 406.700H463M447 413.300H463"/>
    </g>
    <g class="port"><circle cx="532" cy="115.300" r="1"/><circle cx="532" cy="121.700" r="1"/><circle cx="532" cy="128.300" r="1"/><circle cx="532" cy="135" r="1"/><circle cx="532" cy="141.700" r="1"/><circle cx="532" cy="148" r="1"/><circle cx="532" cy="154.700" r="1"/><circle cx="561.500" cy="116.700" r="1"/><circle cx="561.500" cy="125.700" r="1"/><circle cx="561.500" cy="135" r="1"/><circle cx="561.500" cy="144.300" r="1"/><circle cx="561.500" cy="153.300" r="1"/><circle cx="490" cy="115.500" r="1"/><circle cx="514.500" cy="115.500" r="1"/><circle cx="571.500" cy="170" r="1"/><circle cx="621.700" cy="170" r="1"/><circle cx="463.500" cy="213" r="1"/><circle cx="463.500" cy="219.500" r="1"/><circle cx="463.500" cy="226" r="1"/><circle cx="463.500" cy="232.700" r="1"/><circle cx="485.300" cy="222.700" r="1"/><circle cx="516" cy="222.700" r="1"/><circle cx="516" cy="229.300" r="1"/><circle cx="516" cy="235.700" r="1"/><circle cx="516" cy="242.300" r="1"/><circle cx="516" cy="249" r="1"/><circle cx="541" cy="235.700" r="1"/><circle cx="556" cy="280.700" r="1"/><circle cx="556" cy="287.300" r="1"/><circle cx="580" cy="284" r="1"/><circle cx="463" cy="362.500" r="1"/><circle cx="463" cy="369" r="1"/><circle cx="463" cy="375.700" r="1"/><circle cx="463" cy="382.300" r="1"/><circle cx="463" cy="389" r="1"/><circle cx="485.500" cy="375.700" r="1"/><circle cx="463" cy="406.500" r="1"/><circle cx="463" cy="413.300" r="1"/><circle cx="463" cy="419.500" r="1"/><circle cx="485.500" cy="419.500" r="1"/><circle cx="407" cy="233.500" r="1"/><circle cx="425" cy="233.500" r="1"/><circle cx="424.500" cy="222.500" r="1"/><circle cx="447" cy="369" r="1"/><circle cx="447" cy="413.300" r="1"/><circle cx="750" cy="117" r="1"/><circle cx="750" cy="131.500" r="1"/><circle cx="750" cy="147" r="1"/><circle cx="779.500" cy="113" r="1"/><circle cx="779.500" cy="120" r="1"/><circle cx="779.500" cy="126" r="1"/><circle cx="779.500" cy="132" r="1"/><circle cx="779.500" cy="138" r="1"/><circle cx="779.500" cy="145" r="1"/><circle cx="779.500" cy="151" r="1"/><circle cx="673" cy="353" r="1"/></g>
    <g class="box">
      <rect x="532" y="111.300" width="29.500" height="47.700" rx="1" fill="url(#orange)"/>
      <rect x="490.300" y="112" width="24" height="7" rx="1.500" fill="#f6f43c"/>
      <rect x="463.500" y="209" width="21.500" height="27.700" rx="1" fill="url(#comp)"/>
      <rect x="516.300" y="219" width="24.300" height="34.300" rx="1" fill="url(#comp)"/>
      <rect x="556" y="277" width="23.700" height="14.700" rx="1" fill="url(#comp)"/>
      <rect x="463" y="358.700" width="22.300" height="34" rx="1" fill="url(#comp)"/>
      <rect x="463" y="402.700" width="22" height="34" rx="1" fill="url(#comp)"/>
      <rect x="750.500" y="108.500" width="28.500" height="47" rx="1" fill="url(#comp)"/>
      <rect x="425" y="365.300" width="21.700" height="7.400" rx="1" fill="url(#comp)"/>
      <rect x="424.300" y="409.300" width="22.300" height="7.700" rx="1" fill="url(#comp)"/>
      <rect x="395" y="216.300" width="29.300" height="12.700" rx="1" fill="#fff"/>
      <rect x="395" y="216.300" width="29.300" height="5.900" fill="#c4c4c4"/>
      <rect x="407" y="230.300" width="18" height="6.200" rx="1" fill="#fff"/>
      <rect x="571.700" y="158.300" width="49.700" height="23.400" rx="1" fill="#fff"/>
      <rect x="571.700" y="158.300" width="49.700" height="4.600" fill="url(#head)"/>
    </g>
    <path d="M618 159h3v3.500h-3z" fill="#666"/>
    <path d="M438.500 367h6l-3 4.500zM438.500 411h6l-3 4.500z" fill="#111"/>
    <rect x="540.500" y="132" width="6.500" height="6.500" rx="1" fill="none" stroke="#241607" stroke-width="1.100"/><path d="M541 135.300h5.500M543.500 133v5" stroke="#241607" stroke-width=".7"/>
    <rect x="555.500" y="123.500" width="4.500" height="4.500" fill="#ddd" stroke="#666" stroke-width=".6"/><path d="M556.700 125.300h2l-1 1.400z" fill="#222"/>
    <rect x="772.800" y="116.800" width="4.500" height="4.500" fill="#ddd" stroke="#666" stroke-width=".6"/>
    <path d="M757 128l6 3-3 2 4 2-6 1z" fill="#222"/>
    <use href="#tgt" x="469" y="218.500" width="9" height="9"/><use href="#tgt" x="469.500" y="371.300" width="9" height="9"/><use href="#tgt" x="469.500" y="414.500" width="9" height="9"/>
    <use href="#robot" x="525.300" y="231.500" width="8" height="8"/><use href="#robot" x="564.500" y="279.500" width="8" height="8"/>
    <g class="lab">
      <text x="537" y="117">N</text><text x="537" y="123.500">R</text><text x="536.500" y="130">T1</text><text x="536.500" y="136.700">T2</text><text x="537" y="143.300">C</text><text x="537" y="149.700">I</text><text x="537" y="156.300">S</text>
      <text x="550" y="118.200">P</text><text x="550" y="127.300">C</text><text x="550" y="136.700">D</text><text x="550" y="146">W</text><text x="550" y="155">E</text>
      <text x="467.500" y="214.700">J</text><text x="467.500" y="221.200">T</text><text x="467.500" y="227.700">S</text><text x="467.500" y="234.300">Z</text><text x="480" y="224.300">T</text>
      <text x="521" y="224.400">D1</text><text x="521" y="231">D2</text><text x="521" y="237.400">D3</text><text x="521" y="244">D4</text><text x="521" y="250.700">D5</text><text x="535.800" y="237.400">R</text>
      <text x="560.500" y="282.400">D1</text><text x="560.500" y="289">D2</text><text x="575.300" y="285.700">R</text>
      <text x="467.500" y="364">P</text><text x="467.500" y="370.700">M</text><text x="467.500" y="377.400">T</text><text x="467.500" y="384">S</text><text x="467.500" y="390.700">Z</text><text x="481" y="377.400">T</text>
      <text x="467.500" y="408.200">P</text><text x="467.500" y="415">M</text><text x="467.500" y="420.800">T</text><text x="481" y="420.800">T</text>
      <text x="754.500" y="118.500">P</text><text x="754.500" y="133">T</text><text x="754.500" y="148.700">M</text>
      <text x="768" y="114.500">M</text><text x="768" y="121">C</text><text x="768" y="127.500">I</text><text x="768" y="134">P</text><text x="768" y="140">W</text><text x="768" y="146.500">F</text><text x="768" y="153">E</text>
      <text x="431.500" y="370.600">Joint</text><text x="431.500" y="414.800">Linear</text>
    </g>
    <g class="mono">
      <text x="493" y="116.800" textLength="16">Cumella</text>
      <text class="b" x="400.500" y="220.500" textLength="19">de worker</text><text x="400.500" y="227">600</text><text x="413" y="235.300">10</text>
      <text x="597" y="162" textLength="20">{0;0;0;0}</text>
      <text class="g" x="579" y="167.600" textLength="26">Axis 5 speed</text><text class="g" x="574.500" y="171.500" textLength="40">0 limit reached in</text><text class="g" x="579" y="175.600" textLength="17">target 0</text><text class="g" x="579" y="179.700" textLength="31">Rotation speed</text>
    </g>
    <rect x="673.500" y="304.500" width="130" height="97.500" fill="#fff" stroke="#555" stroke-width=".8"/>
    <rect x="674" y="305" width="120" height="5" fill="url(#head)"/>
    <path d="M674 310h6v91.500h-6z" fill="#ececec"/>
    <g class="code">
      <text x="677" y="314.300">0</text><text x="681" y="314.300" textLength="45">MODULE Cumella_T_ROB1</text>
      <text x="677" y="319.600">1</text><text x="681" y="319.600" textLength="102">VAR extjoint extj := [9E9,9E9,9E9,9E9,9E9,9E9];</text>
      <text x="677" y="324.900">2</text><text x="681" y="324.900" textLength="67">VAR confdata conf := [0,0,0,0];</text>
      <text x="677" y="330.100">3</text><text x="681" y="330.100" textLength="105">PERS tooldata Cumella_Roller:=[TRUE,[[0.000,0.00</text>
      <text x="677" y="335.400">4</text><text x="681" y="335.400" textLength="105">TASK PERS wobjdata DefaultFrame:=[FALSE,TRUE,"",</text>
      <text x="677" y="340.700">5</text><text x="681" y="340.700" textLength="105">TASK PERS speeddata Speed000:=[500.00,180.00,500</text>
      <text x="677" y="345.900">6</text><text x="681" y="345.900" textLength="105">TASK PERS speeddata Speed001:=[500.00,180.00,500</text>
      <text x="677" y="351.200">7</text><text x="681" y="351.200" textLength="105">TASK PERS speeddata Speed002:=[500.00,180.00,500</text>
      <text x="677" y="356.500">8</text><text x="681" y="356.500" textLength="105">TASK PERS zonedata Zone000:=[FALSE,10.00,10.00,1</text>
      <text x="677" y="361.800">9</text><text x="681" y="361.800" textLength="105">TASK PERS zonedata Zone001:=[FALSE,10.00,10.00,1</text>
      <text x="675" y="367">10</text><text x="681" y="367" textLength="105">TASK PERS zonedata Zone002:=[FALSE,10.00,10.00,1</text>
      <text x="675" y="372.300">11</text><text x="681" y="372.300" textLength="24">PROC Main()</text>
      <text x="675" y="377.600">12</text><text x="681" y="377.600" textLength="25">ConfL \Off;</text>
      <text x="675" y="382.800">13</text><text x="681" y="382.800" textLength="105">MoveAbsJ [[-20.000,-80.000,50.000,-80.000,-110.0</text>
      <text x="675" y="388.100">14</text><text x="681" y="388.100" textLength="105">MoveJ [[411.00,-606.56,-54.00],[0.0000,0.7071,-0</text>
      <text x="675" y="393.400">15</text><text x="681" y="393.400" textLength="105">MoveL [[411.00,-606.56,-154.00],[0.0000,0.7071,-</text>
      <text x="675" y="398.600">16</text><text x="681" y="398.600" textLength="105">MoveL [[411.00,-511.16,-154.00],[0.0000,0.7071,-</text>
    </g>
    <g class="mark"><text x="643" y="407.500" font-size="8" textLength="61">Activar Windows</text><text x="643" y="416" font-size="5.800" textLength="113">Ve a Configuración para activar Windows.</text></g>
    <path d="M763 406l3-1a9 9 0 0 1 17 1v7" fill="none" stroke="#151515" stroke-width="1.500"/><path d="M762 404.500l5 .5-1 3.500z" fill="#111"/>
    <circle cx="774" cy="408.500" r="7.800" fill="#d5d5d5" stroke="#555" stroke-width=".7"/><circle cx="773.500" cy="408" r="5" fill="#e6e6e6" stroke="#aaa" stroke-width=".6"/>
  </svg>
  <div class="gstatus"><svg width="8" height="8" viewBox="0 0 8 8"><circle cx="4" cy="4" r="3.300" fill="#1d5fb4" stroke="#123f80" stroke-width=".5"/><path d="M4 2v4M2.500 4h3" stroke="#fff" stroke-width=".8"/></svg><span>Autosave complete (80 seconds ago)</span><span class="ver">0.9.0076</span></div>
</section>
</div>
<div class="status"><span>CPlane</span><span>x 1077.940</span><span>y -131.675</span><span>z 0.000</span><span>Millimeters</span><span class="layer">Default</span><span>Grid Snap</span><span class="hot">Ortho</span><span>Planar</span><span class="hot">Osnap</span><span class="hot">SmartTrack</span><span class="hot">Gumball</span><span>Record History</span><span>Filter</span><span>Absolute tolerance: 0.001</span></div>
</body>
</html>
```
FILE: styles.css
```css
* { box-sizing: border-box; }
body {
  margin: 0;
  width: 787px;
  height: 436px;
  overflow: hidden;
  display: flex;
  flex-direction: column;
  background: #fff;
  color: #222;
  font: 5.6px/1 "Liberation Sans", Arial, sans-serif;
  letter-spacing: -.24px;
  text-rendering: geometricPrecision;
}
.defs { position: absolute; }
svg { display: block; letter-spacing: 0; }
.topgap { height: 22px; flex: none; }
.desk { height: 409px; flex: none; display: flex; }
span, label { white-space: nowrap; }

/* modelling window */
.rhino { width: 398px; flex: none; display: flex; flex-direction: column; background: #e3e8f1; }
.rmenu {
  height: 6px; flex: none; overflow: hidden; background: #fff; color: #777; padding-left: 3px; line-height: 4px; font-size: 5.4px;
  display: grid; grid-template-columns: 12.7px 14.3px 16px 19px 22px 16px 17px 30.7px 28.3px 16px 23px 21px 19px 42px 20px;
}
.history { height: 12px; flex: none; margin-left: 2px; padding: 0 1px; border: 1px solid #c2c7d0; border-right: 0; background: #fff; line-height: 7px; font-size: 5.6px; letter-spacing: -.27px; white-space: nowrap; }
.command { height: 9px; flex: none; margin-left: 2px; padding-left: 1px; background: #fff; line-height: 8px; font-weight: bold; letter-spacing: -.4px; border-left: 1px solid #c2c7d0; }
.rtabs {
  height: 10px; flex: none; margin-top: 1px; padding-left: 4px; background: #ced7e7; align-items: end; overflow: hidden;
  display: grid; grid-template-columns: 26px 24px 25px 22px 20px 38px 24px 27px 31px 35px 29px 31px 34px 20px 8px;
}
.rtabs span { height: 8px; line-height: 8px; padding-left: 2px; font-size: 5.2px; border-right: 1px solid #b3bfd5; border-radius: 2px 3px 0 0; background: #d9e0ed; }
.rtabs .on { background: #fff; }
.rtabs .last { border-right: 0; padding-left: 1px; }
.rtools { height: 14px; flex: none; display: flex; align-items: center; padding-left: 2px; background: #eef1f7; overflow: hidden; }
.rtools svg { width: 11.6px; height: 11px; flex: none; padding: .5px; }
.rtools i { width: 1.7px; height: 9px; flex: none; border-left: 1px solid #c3cad8; }
.rtools .wide { width: 3px; }
.rmain { height: 335px; flex: none; display: flex; }
.palette { width: 27px; flex: none; padding: 3.500px 0 0 1px; display: grid; grid-template-columns: 11.500px 11.500px; grid-auto-rows: 11.570px; align-content: start; }
.palette svg { width: 11px; height: 11px; padding: 1px; }
.viewport { flex: 1; background: #000; position: relative; border-top: 1px solid #aeb6c4; overflow: hidden; }
.scene { width: 371px; height: 334px; }
.vlabel { position: absolute; left: 0; top: 0; width: 36px; height: 7px; display: flex; background: #86a6d0; color: #16243c; line-height: 7px; padding-left: 3px; font-size: 5.400px; justify-content: space-between; padding-right: 1px; }
.vlabel b { border: 2px solid transparent; border-top: 3px solid #111; border-bottom: 0; align-self: center; height: 3px; width: 4px; }
.axis { fill: #888; font-size: 6px; }
.vtabs { height: 11px; flex: none; padding-left: 28px; display: grid; grid-template-columns: 31px 16px 18px 20px 11px; border-top: 1px solid #f5f7fb; }
.vtabs span { height: 8px; line-height: 8px; text-align: center; border-radius: 0 0 4px 4px; background: #d0d8ea; border-right: 1px solid #b4bdd0; }
.vtabs .on { background: #fff; }
.osnap {
  height: 11px; flex: none; padding-left: 4px; align-items: center; font-size: 5.300px;
  display: grid; grid-template-columns: 18px 20px 20px 17px 19px 15px 19px 18px 21px 20px 22.500px 23.500px 24px;
}
.osnap label { display: flex; align-items: center; gap: 2px; letter-spacing: -.3px; }
.osnap label::before { content: ""; flex: none; width: 6px; height: 6px; border: .8px solid #777; background: #fff; font-size: 5px; line-height: 4px; color: #222; }
.osnap .c::before { content: "✓"; }
.osnap .off::before { border-color: #bbb; background: #e6e6e6; }

/* node editor window */
.gh { width: 389px; flex: none; display: flex; flex-direction: column; background: #f3f3f3; border-left: 2px solid #c87a98; border-bottom: 1px solid #c98aa8; }
.gmenu { height: 11px; flex: none; padding-left: 6px; line-height: 11.500px; display: grid; grid-template-columns: 14px 15px 17.500px 22px 23px 253.500px 34px; }
.gmenu .title { letter-spacing: -.45px; }
.gtabs { height: 9px; flex: none; display: flex; overflow: hidden; color: #777; letter-spacing: 0; }
.gtabs span { width: 11.560px; flex: none; text-align: center; line-height: 9px; font-size: 5.500px; }
.gtabs .end { width: 5px; text-align: left; }
.gtabs .on { background: #fff; color: #222; border: 1px solid #ccc; border-bottom: 0; border-radius: 2px 2px 0 0; line-height: 7px; }
.ribbon { height: 35px; flex: none; display: flex; gap: 1.500px; padding: 1px .500px; background: linear-gradient(#efefef, #d2d2d2); border-bottom: 1px solid #bbb; }
.group { height: 31px; background: linear-gradient(#dedede, #cacaca); border-radius: 1px; display: flex; flex-direction: column; }
.geo { width: 80px; } .prim { width: 40px; } .inp { width: 71.500px; } .util { width: 56px; }
.group em { height: 6px; position: relative; background: #1a1a1a; color: #eee; font-style: normal; text-align: center; line-height: 6px; font-size: 5px; border-radius: 1px; letter-spacing: 0; }
.group em b { position: absolute; right: 1px; top: 0; font-size: 5px; }
.hexlet { fill: #fff; font: bold 6px "Liberation Sans", sans-serif; text-anchor: middle; }
.gtool { height: 14px; flex: none; display: flex; align-items: center; background: #fdfdfd; padding-left: 1px; }
.combo { width: 28px; height: 10px; margin-left: 1px; border: 1px solid #bbb; display: flex; align-items: center; justify-content: space-between; padding: 0 2px 0 1px; background: #fff; font-size: 5.800px; }
.gtool .right { margin-left: auto; }
.canvas { flex: none; }
.wire path { fill: none; stroke: #5b5956; stroke-width: .9; }
.wire .dbl { stroke: #64625e; stroke-width: 1.600; }
.faint path { fill: none; stroke: #8d8a83; stroke-width: .500; opacity: .5; }
.port circle { fill: #eee; stroke: #222; stroke-width: .700; }
.box rect { stroke: #4a4a50; stroke-width: .700; }
.lab { font: 4.200px "Liberation Sans", sans-serif; fill: #1c1c22; text-anchor: middle; }
.mono { font: 4px "Liberation Mono", monospace; fill: #222; }
.mono .g { fill: #1c4420; }
.mono .b { font-weight: bold; }
.code { font: 4.200px "Liberation Mono", monospace; fill: #1d4d22; }
.mark { fill: #a5a29c; font-family: "Open Sans", sans-serif; }
.gstatus { height: 9px; flex: none; display: flex; align-items: center; background: #fbfbfb; padding-left: 1px; font-size: 5.200px; letter-spacing: -.35px; }
.gstatus .ver { margin-left: auto; padding-right: 7px; color: #555; letter-spacing: -.2px; }
.status {
  height: 5px; flex: none; overflow: hidden; background: #d5dce6; line-height: 7px; padding-left: 2px;
  display: grid; grid-template-columns: 24px 37px 40px 32px 33px 75px 28px 20px 22px 23px 34px 31px 43px 15px 80px;
}
.status span { padding-left: 1px; height: 7px; border-left: .500px solid #aab2bf; }
.status .hot { font-weight: bold; background: #c8e6f3; font-size: 5.200px; }
.status .layer::before { content: ""; display: inline-block; width: 5px; height: 5px; background: #000; margin-right: 2px; vertical-align: top; margin-top: 1px; }
```
